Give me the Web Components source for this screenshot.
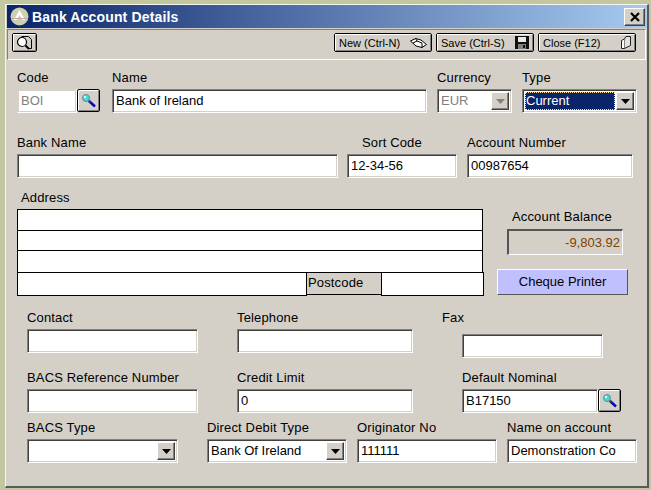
<!DOCTYPE html>
<html>
<head>
<meta charset="utf-8">
<title>Bank Account Details</title>
<style>
  html, body { margin: 0; padding: 0; background: #c3c79f; }
  body { font: 13px "Liberation Sans", Arial, sans-serif; color: #000; }
</style>
</head>
<body>
<app-window>
  <title-bar slot="title">Bank Account Details</title-bar>
  <tool-bar slot="tools">
    <tool-button slot="left" icon="find" style="width:25px"></tool-button>
    <tool-button icon="new" style="width:98px">New (Ctrl-N)</tool-button>
    <tool-button icon="save" style="width:98px">Save (Ctrl-S)</tool-button>
    <tool-button icon="close" style="width:98px">Close (F12)</tool-button>
  </tool-bar>

  <form-row style="margin-top:10px;padding-left:10px">
    <form-field label="Code" style="--w:82px;margin-right:13px">
      <text-box value="BOI" disabled style="width:60px;flex:none"></text-box><lookup-button></lookup-button>
    </form-field>
    <form-field label="Name" style="--w:315px;margin-right:10px"><text-box value="Bank of Ireland"></text-box></form-field>
    <form-field label="Currency" style="--w:75px;margin-right:10px"><combo-box value="EUR" disabled></combo-box></form-field>
    <form-field label="Type" style="--w:115px"><combo-box value="Current" focused></combo-box></form-field>
  </form-row>

  <form-row style="margin-top:22px;padding-left:10px">
    <form-field label="Bank Name" style="--w:321px;margin-right:9px"><text-box></text-box></form-field>
    <form-field label="Sort Code" style="--w:110px;--lx:15px;margin-right:10px"><text-box value="12-34-56"></text-box></form-field>
    <form-field label="Account Number" style="--w:166px"><text-box value="00987654"></text-box></form-field>
  </form-row>

  <form-row style="margin-top:12px;padding-left:10px">
    <form-field label="Address" style="--w:467px;--lx:4px;margin-right:13px"><address-block></address-block></form-field>
    <balance-panel></balance-panel>
  </form-row>

  <form-row style="margin-top:13px;padding-left:20px">
    <form-field label="Contact" style="--w:171px;margin-right:39px"><text-box></text-box></form-field>
    <form-field label="Telephone" style="--w:176px;margin-right:49px"><text-box></text-box></form-field>
    <form-field label="Fax" style="--w:141px;--lx:-20px;--ct:5px"><text-box></text-box></form-field>
  </form-row>

  <form-row style="margin-top:12px;padding-left:20px">
    <form-field label="BACS Reference Number" style="--w:171px;margin-right:39px"><text-box></text-box></form-field>
    <form-field label="Credit Limit" style="--w:176px;margin-right:49px"><text-box value="0"></text-box></form-field>
    <form-field label="Default Nominal" style="--w:159px">
      <text-box value="B17150" style="width:136px;flex:none"></text-box><lookup-button></lookup-button>
    </form-field>
  </form-row>

  <form-row style="margin-top:7px;padding-left:20px">
    <form-field label="BACS Type" style="--w:151px;margin-right:29px"><combo-box></combo-box></form-field>
    <form-field label="Direct Debit Type" style="--w:140px;margin-right:10px"><combo-box value="Bank Of Ireland"></combo-box></form-field>
    <form-field label="Originator No" style="--w:140px;margin-right:10px"><text-box value="111111"></text-box></form-field>
    <form-field label="Name on account" style="--w:130px"><text-box value="Demonstration Co"></text-box></form-field>
  </form-row>
</app-window>

<script>
// icons used across the dialog, drawn at their pixel size
const ICONS = {
  find: `<svg width="17" height="14" viewBox="0 0 17 14" fill="none">
      <path d="M5.500 .5H12.500L15.500 3.500V12.500H13" stroke="#000"/>
      <circle cx="6" cy="6" r="4.500" fill="#fff" stroke="#000" stroke-width="1.200"/>
      <path d="M9.500 9.500L13 13" stroke="#000" stroke-width="2"/></svg>`,
  new: `<svg width="17" height="10" viewBox="0 0 17 10" fill="none" stroke="#000">
      <path d="M.5 3L5.500 .5L11 2L16.500 6.500L12 9.500L6 8Z" fill="#fff"/>
      <path d="M3 5L7 3L12 5L12 9.500M7 3L5.500 .5"/></svg>`,
  save: `<svg width="14" height="13" viewBox="0 0 14 13">
      <rect width="14" height="13" fill="#111"/>
      <rect x="3" y="1" width="8" height="5" fill="#e8e8e8"/>
      <rect x="3" y="8" width="8" height="5" fill="#808080"/>
      <rect x="8" y="9" width="2" height="3" fill="#111"/></svg>`,
  close: `<svg width="10" height="13" viewBox="0 0 10 13" fill="none" stroke="#222">
      <path d="M.5 4.500L3.500 3V12.500H.5Z" fill="#fff"/>
      <path d="M3.500 3L5 .5H9.500V9.500L3.500 12.500" fill="#e4e2dc"/></svg>`,
  lookup: `<svg width="16" height="15" viewBox="0 0 16 15">
      <path d="M8 8L14 13.500" stroke="#0000d0" stroke-width="2.500"/>
      <path d="M7.500 7.500L9.500 9.500" stroke="#404040" stroke-width="2"/>
      <circle cx="5" cy="5" r="3.500" fill="#30e0e0" stroke="#808080"/>
      <circle cx="4" cy="4" r="1.200" fill="#d0ffff"/></svg>`,
  arrow: `<svg width="9" height="5" viewBox="0 0 9 5"><path d="M0 0H9L4.500 5Z"/></svg>`
};

// shared sunken edge, the old Windows 3D look
const SUNKEN = `
  border: 1px solid; border-color: #808080 #fff #fff #808080;
  box-shadow: inset 1px 1px 0 #404040, inset -1px -1px 0 #d4d0c8;
`;

// small helper so each class only has to give its markup
function makeElement(name, html) {
  class El extends HTMLElement {
    constructor() {
      super();
      this.attachShadow({ mode: 'open' });
    }
    connectedCallback() {
      this.shadowRoot.innerHTML = typeof html === 'function' ? html(this) : html;
    }
  }
  customElements.define(name, El);
}

makeElement('app-window', `
  <style>
    :host { display: block; box-sizing: border-box; width: 651px; height: 490px; padding: 4px 2px 2px 5px; }
    .frame { box-sizing: border-box; height: 100%; background: #d4d0c8; padding: 0 0 0 1px;
      border-top: 1px solid #f4f4f0; border-left: 1px solid #f4f4f0; border-right: 2px solid #5a5a5a; border-bottom: 2px solid #5a5a5a; }
  </style>
  <div class="frame">
    <slot name="title"></slot>
    <slot name="tools"></slot>
    <slot></slot>
  </div>
`);

makeElement('title-bar', `
  <style>
    :host { display: flex; align-items: center; height: 23px; padding: 0 2px 0 3px; box-sizing: border-box;
      background: linear-gradient(to right, #0a246a, #a6caf0); color: #fff; font-weight: bold; font-size: 14px; letter-spacing: .15px; }
    .logo { margin-right: 3px; flex: none; }
    .text { flex: 1; }
    .x { box-sizing: border-box; width: 21px; height: 18px; background: #d4d0c8; display: flex; align-items: center; justify-content: center;
      border: 1px solid; border-color: #fff #404040 #404040 #fff; box-shadow: inset -1px -1px 0 #808080; }
  </style>
  <svg class="logo" width="19" height="19" viewBox="0 0 19 19">
    <circle cx="9.500" cy="9.500" r="9" fill="#cfd0b0"/>
    <path d="M9.500 3L15 13H12.500L9.500 8L6.500 13H4Z" fill="#fff"/>
    <path d="M1 11.500H18" stroke="#c0a8a8"/>
  </svg>
  <span class="text"><slot></slot></span>
  <span class="x"><svg width="10" height="10" viewBox="0 0 10 10"><path d="M1 1L9 9M9 1L1 9" stroke="#000" stroke-width="2.200"/></svg></span>
`);

makeElement('tool-bar', `
  <style>
    :host { display: flex; align-items: flex-start; justify-content: space-between; box-sizing: border-box; height: 31px; margin: 1px 1px 0 0;
      padding: 3px 9px 0 4px; border-left: 1px solid #808080; border-top: 1px solid #808080; border-bottom: 1px solid #fff; border-right: 1px solid #fff; }
    .right { display: flex; gap: 4px; }
  </style>
  <slot name="left"></slot>
  <div class="right"><slot></slot></div>
`);

makeElement('tool-button', el => `
  <style>
    :host { display: block; box-sizing: border-box; height: 19px; background: #d4d0c8; border: 1px solid #000; border-radius: 2px; font-size: 11px; }
    .in { display: flex; align-items: center; justify-content: space-between; height: 100%; box-sizing: border-box; padding: 0 3px 0 3px; border-top: 1px solid #fff; border-left: 1px solid #fff; border-bottom: 1px solid #808080; border-right: 1px solid #808080; white-space: nowrap; }
    :host([icon="find"]) .in { padding: 0; justify-content: center; }
    :host([icon="find"]) span { display: none; }
  </style>
  <div class="in"><span><slot></slot></span>${ICONS[el.getAttribute('icon')]}</div>
`);

makeElement('form-row', `
  <style>:host { display: flex; align-items: flex-start; }</style>
  <slot></slot>
`);

makeElement('form-field', el => `
  <style>
    :host { display: block; flex: none; width: var(--w, auto); }
    label { display: block; height: 16px; line-height: 16px; margin: 0 0 3px var(--lx, 0); white-space: nowrap; letter-spacing: .15px; }
    .control { display: flex; padding-top: var(--ct, 0); }
  </style>
  <label>${el.getAttribute('label')}</label>
  <div class="control"><slot></slot></div>
`);

makeElement('text-box', el => `
  <style>
    :host { display: block; flex: 1 1 auto; box-sizing: border-box; height: 24px; background: #fff; ${SUNKEN} padding: 0 3px; line-height: 22px; white-space: nowrap; overflow: hidden; }
    :host([disabled]) { color: #808080; border-color: #d4d0c8 #fff #fff #d4d0c8; box-shadow: inset 0 0 0 1px #d4d0c8; }
  </style>
  ${el.getAttribute('value') || ''}
`);

makeElement('combo-box', el => `
  <style>
    :host { display: flex; flex: 1 1 auto; box-sizing: border-box; height: 24px; background: #fff; ${SUNKEN} padding: 2px; line-height: 18px; }
    .val { flex: 1; padding-left: 1px; margin-right: 1px; white-space: nowrap; overflow: hidden; }
    :host([disabled]) .val { color: #808080; }
    :host([focused]) .val { background: #0a246a; color: #fff; outline: 1px dotted #ffe9a0; outline-offset: -1px; }
    .btn { flex: none; box-sizing: border-box; width: 18px; background: #d4d0c8; display: flex; align-items: center; justify-content: center; border: 1px solid; border-color: #fff #404040 #404040 #fff; box-shadow: inset -1px -1px 0 #808080; }
    :host([disabled]) .btn path { fill: #808080; }
  </style>
  <span class="val">${el.getAttribute('value') || ''}</span>
  <span class="btn">${ICONS.arrow}</span>
`);

makeElement('lookup-button', `
  <style>
    :host { display: flex; flex: none; align-items: center; justify-content: center; box-sizing: border-box; width: 23px; height: 23px;
      background: #d4d0c8; border: 1px solid #000; border-radius: 2px; box-shadow: inset 1px 1px 0 #fff, inset -1px -1px 0 #808080; }
  </style>
  ${ICONS.lookup}
`);

makeElement('address-block', `
  <style>
    :host { display: block; width: 467px; }
    .line { box-sizing: border-box; width: 466px; height: 21px; background: #fff; border: 1px solid #000; margin-top: -1px; }
    .line.first { margin-top: 0; height: 22px; }
    .last { display: flex; width: 467px; height: 25px; background: transparent; border: 0; }
    .last > div { box-sizing: border-box; border: 1px solid #000; background: #fff; height: 24px; }
    .last > .a { width: 290px; }
    .last > .pc { width: 74px; background: #d4d0c8; border-width: 0 0 1px 0; height: 22px; margin-top: 1px; padding-left: 1px; line-height: 20px; letter-spacing: .15px; }
    .last > .b { width: 103px; }
  </style>
  <div class="line first"></div>
  <div class="line"></div>
  <div class="line" style="height:23px"></div>
  <div class="line last"><div class="a"></div><div class="pc">Postcode</div><div class="b"></div></div>
`);

makeElement('balance-panel', `
  <style>
    :host { display: flex; flex-direction: column; width: 131px; padding-top: 19px; }
    .cap { height: 16px; line-height: 16px; margin: 0 0 4px 15px; letter-spacing: .15px; }
    .box { box-sizing: border-box; width: 116px; height: 26px; margin-left: 10px; padding: 0 2px; text-align: right; line-height: 23px; color: #804000; border: 1px solid; border-color: #555 #fff #fff #555; border-width: 2px 1px 1px 2px; }
    .btn { box-sizing: border-box; height: 26px; margin-top: 14px; background: #c0c0ff; text-align: center; line-height: 24px; border: 1px solid; border-color: #fff #555 #555 #fff; }
  </style>
  <div class="cap">Account Balance</div>
  <div class="box">-9,803.92</div>
  <div class="btn">Cheque Printer</div>
`);
</script>
</body>
</html>
